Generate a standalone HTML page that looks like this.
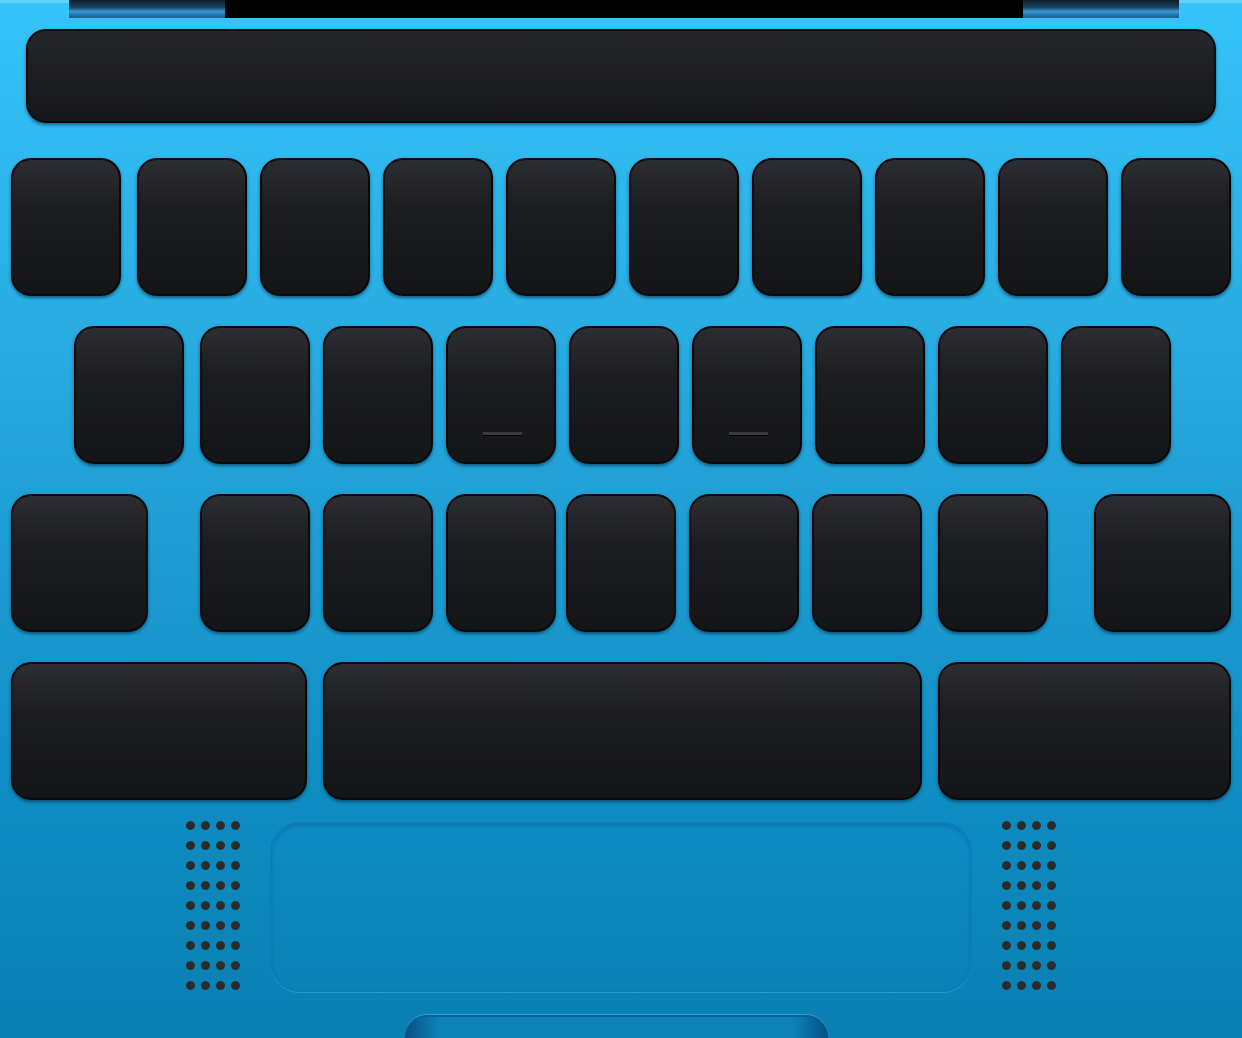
<!DOCTYPE html><html style="height:1038px;overflow:hidden;background:#0a7fb2"><head><style>
body{margin:0;width:1242px;height:1038px;overflow:hidden;position:relative;background:linear-gradient(#35c4f9 0%,#25a6db 40%,#0d8bc0 80%,#0a7fb2 100%);font-family:"Liberation Sans",sans-serif}
div{position:absolute;box-sizing:border-box}
.k{background:linear-gradient(#2d2e33 0%,#1c1d21 35%,#141517 100%);border:2px solid #08090a;border-radius:20px;box-shadow:0 2px 3px rgba(0,40,70,.6)}
.d{width:9px;height:9px;border-radius:50%;background:#2b2b2b}
.tab{top:0;height:18px;background:linear-gradient(#0c1e2e 0%,#18405f 40%,#3b9ad8 65%,#2479b0 80%,#1d5f8a 100%)}
</style></head><body>
<div style="left:0;top:0;width:1242px;height:3px;background:#5fd3fc"></div>
<div style="left:225px;top:0;width:798px;height:18px;background:#000"></div>
<div class="tab" style="left:69px;width:156px"></div>
<div class="tab" style="left:1023px;width:156px"></div>
<div class="k" style="left:26px;top:29px;width:1190px;height:94px;background:linear-gradient(#26272b,#151619)"></div>
<div id="keys"></div>
<div style="left:270px;top:822px;width:702px;height:170px;border-radius:30px;border:2px solid #0c7dbc;box-shadow:inset 0 2px 3px rgba(0,60,120,.25),0 1px 0 rgba(120,210,250,.3)"></div>
<div style="left:405px;top:1015px;width:423px;height:23px;border-radius:22px 22px 0 0;background:linear-gradient(90deg,#064f85 0%,#0d82b5 8%,#0d82b5 92%,#064f85 100%);border-top:2px solid #0b5f92;box-shadow:0 -1px 0 #2ba3d6"></div>
<script>
var h='';function K(x,y,w,h2){h+='<div class="k" style="left:'+x+'px;top:'+y+'px;width:'+w+'px;height:'+(h2||138)+'px"></div>';}
[11,137,260,383,506,629,752,875,998,1121].forEach(function(x){K(x,158,110)});
[74,200,323,446,569,692,815,938,1061].forEach(function(x){K(x,326,110)});
K(11,494,137);[200,323,446,566,689,812,938].forEach(function(x){K(x,494,110)});K(1094,494,137);
K(11,662,296);K(323,662,599);K(938,662,293);
h+='<div style="left:483px;top:432px;width:39px;height:4px;background:#3a3b3e;border-bottom:1px solid #000"></div>';
h+='<div style="left:729px;top:432px;width:39px;height:4px;background:#3a3b3e;border-bottom:1px solid #000"></div>';
[186,1002].forEach(function(bx){for(var r=0;r<9;r++)for(var c=0;c<4;c++)h+='<div class="d" style="left:'+(bx+c*15)+'px;top:'+(821+r*20)+'px"></div>';});
document.getElementById('keys').outerHTML=h;
</script>
</body></html>
